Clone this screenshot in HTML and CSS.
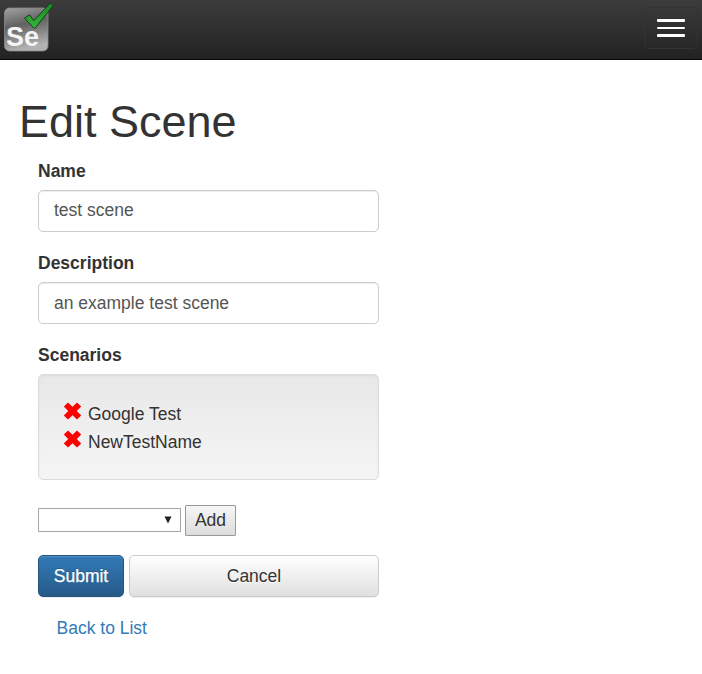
FILE: index.html
```html
<!DOCTYPE html>
<html lang="en">
<head>
<meta charset="utf-8">
<title>Edit Scene</title>
<link rel="stylesheet" href="styles.css">
</head>
<body>
<header class="navbar">
  <a class="brand" href="#" aria-label="Home">
    <svg width="56" height="56" viewBox="0 0 56 56">
      <defs>
        <linearGradient id="tile" x1="0" y1="0" x2="0.25" y2="1">
          <stop offset="0" stop-color="#a2a2a2"/>
          <stop offset="0.45" stop-color="#626262"/>
          <stop offset="0.6" stop-color="#777"/>
          <stop offset="1" stop-color="#b2b2b2"/>
        </linearGradient>
        <linearGradient id="tick" x1="0" y1="0" x2="0" y2="1">
          <stop offset="0" stop-color="#168a22"/>
          <stop offset="1" stop-color="#36b53b"/>
        </linearGradient>
      </defs>
      <rect x="4.5" y="8" width="43.5" height="43" rx="5" fill="url(#tile)" stroke="#8c8c8c" stroke-width="0.8"/>
      <text class="logo-text" x="6" y="46" textLength="33" lengthAdjust="spacingAndGlyphs">Se</text>
      <path d="M24.5 18.2l5-3.4 4.3 5.8L50.2 3.2l3.2 2.1L34.6 28.8z" fill="url(#tick)" stroke="#173b19" stroke-width="1"/>
    </svg>
  </a>
  <button class="toggle" aria-label="Menu"><span></span><span></span><span></span></button>
</header>
<main class="page">
  <h1>Edit Scene</h1>
  <form class="form">
    <label for="name">Name</label>
    <input class="field" id="name" type="text" value="test scene">
    <label for="description">Description</label>
    <input class="field lower" id="description" type="text" value="an example test scene">
    <label>Scenarios</label>
    <div class="well">
      <div class="scenario"><svg class="remove" viewBox="0 0 18 18"><path d="M4.5.4L9 4.7 13.5.4l4.2 4.2L13.3 9l4.4 4.4-4.2 4.2L9 13.3l-4.5 4.3-4.2-4.2L4.7 9 .3 4.6z"/></svg><span>Google Test</span></div>
      <div class="scenario"><svg class="remove" viewBox="0 0 18 18"><path d="M4.5.4L9 4.7 13.5.4l4.2 4.2L13.3 9l4.4 4.4-4.2 4.2L9 13.3l-4.5 4.3-4.2-4.2L4.7 9 .3 4.6z"/></svg><span>NewTestName</span></div>
    </div>
    <div class="add-row">
      <div class="select" role="combobox"><svg width="8" height="8" viewBox="0 0 8 8"><path d="M.5.5h7L4 7.5z" fill="#222"/></svg></div>
      <button class="add" type="button">Add</button>
    </div>
    <div class="actions">
      <button class="btn primary" type="button">Submit</button>
      <button class="btn cancel" type="button">Cancel</button>
    </div>
    <a class="back" href="#">Back to List</a>
  </form>
</main>
</body>
</html>
```

FILE: styles.css
```css
* { box-sizing: border-box; }
body {
  margin: 0;
  background: #fff;
  color: #333;
  font: 17.5px/25px "Liberation Sans", Arial, sans-serif;
}
button, input { font: inherit; color: inherit; }
.navbar {
  height: 60px;
  display: flex;
  justify-content: space-between;
  align-items: flex-start;
  padding-right: 4px;
  background: linear-gradient(#3c3c3c, #222);
  border-bottom: 1px solid #080808;
}
.brand { display: block; height: 56px; }
.brand svg { display: block; }
.logo-text {
  font: bold 27px "Liberation Sans", Arial, sans-serif;
  fill: #f4f4f4;
}
.toggle {
  width: 54px;
  height: 42px;
  margin-top: 7px;
  padding: 0 0 0 12px;
  display: flex;
  flex-direction: column;
  justify-content: center;
  gap: 5px;
  background: none;
  border: 1px solid #333;
  border-radius: 5px;
}
.toggle span { width: 28px; height: 3px; background: #fff; border-radius: 1px; }
.toggle span:nth-child(2) { height: 2px; }
.page { padding: 37px 20px 0 19px; }
h1 { margin: 0 0 12px; font-size: 45px; font-weight: 400; line-height: 50px; }
.form { width: 341px; margin-left: 19px; display: flex; flex-direction: column; }
label { font-weight: 700; height: 25px; margin-bottom: 6px; }
.field {
  width: 341px;
  height: 42px;
  margin: 0 0 19px;
  padding: 0 15px 2px;
  color: #555;
  background: #fff;
  border: 1px solid #ccc;
  border-radius: 5px;
  box-shadow: inset 0 1px 1px rgba(0, 0, 0, .075);
}
.lower { padding-bottom: 0; }
.well {
  height: 106px;
  padding: 24px 24px 0;
  background: linear-gradient(#e8e8e8, #f5f5f5);
  border: 1px solid #dcdcdc;
  border-radius: 5px;
  box-shadow: inset 0 1px 3px rgba(0, 0, 0, .05), 0 1px 0 rgba(255, 255, 255, .1);
}
.scenario { height: 28px; display: flex; gap: 6px; }
.scenario span { padding-top: 3px; }
.remove { width: 19px; height: 18px; margin-top: 3px; fill: red; }
.add-row { display: flex; align-items: flex-start; gap: 4px; margin-top: 25px; }
.select {
  width: 143px;
  height: 24px;
  margin-top: 3px;
  padding-right: 8px;
  display: flex;
  align-items: center;
  justify-content: flex-end;
  background: #fff;
  border: 1px solid #a6a6a6;
}
.add {
  width: 51px;
  height: 31px;
  padding: 0;
  background: linear-gradient(#f6f6f6, #ddd);
  border: 1px solid #999;
  border-radius: 1px;
}
.actions { display: flex; gap: 5px; margin-top: 19px; }
.btn {
  height: 42px;
  padding: 0;
  border: 1px solid #ccc;
  border-radius: 5px;
  box-shadow: inset 0 1px 0 rgba(255, 255, 255, .15), 0 1px 1px rgba(0, 0, 0, .075);
}
.primary {
  width: 86px;
  color: #fff;
  background: linear-gradient(#337ab7, #265a88);
  border-color: #245580;
  text-shadow: 0 -1px 0 rgba(0, 0, 0, .2);
  -webkit-text-stroke: .25px #fff;
}
.cancel {
  width: 250px;
  background: linear-gradient(#fff, #e0e0e0);
  text-shadow: 0 1px 0 #fff;
}
.back { align-self: flex-start; margin: 19px 0 0 18.5px; color: #337ab7; text-decoration: none; }
```
